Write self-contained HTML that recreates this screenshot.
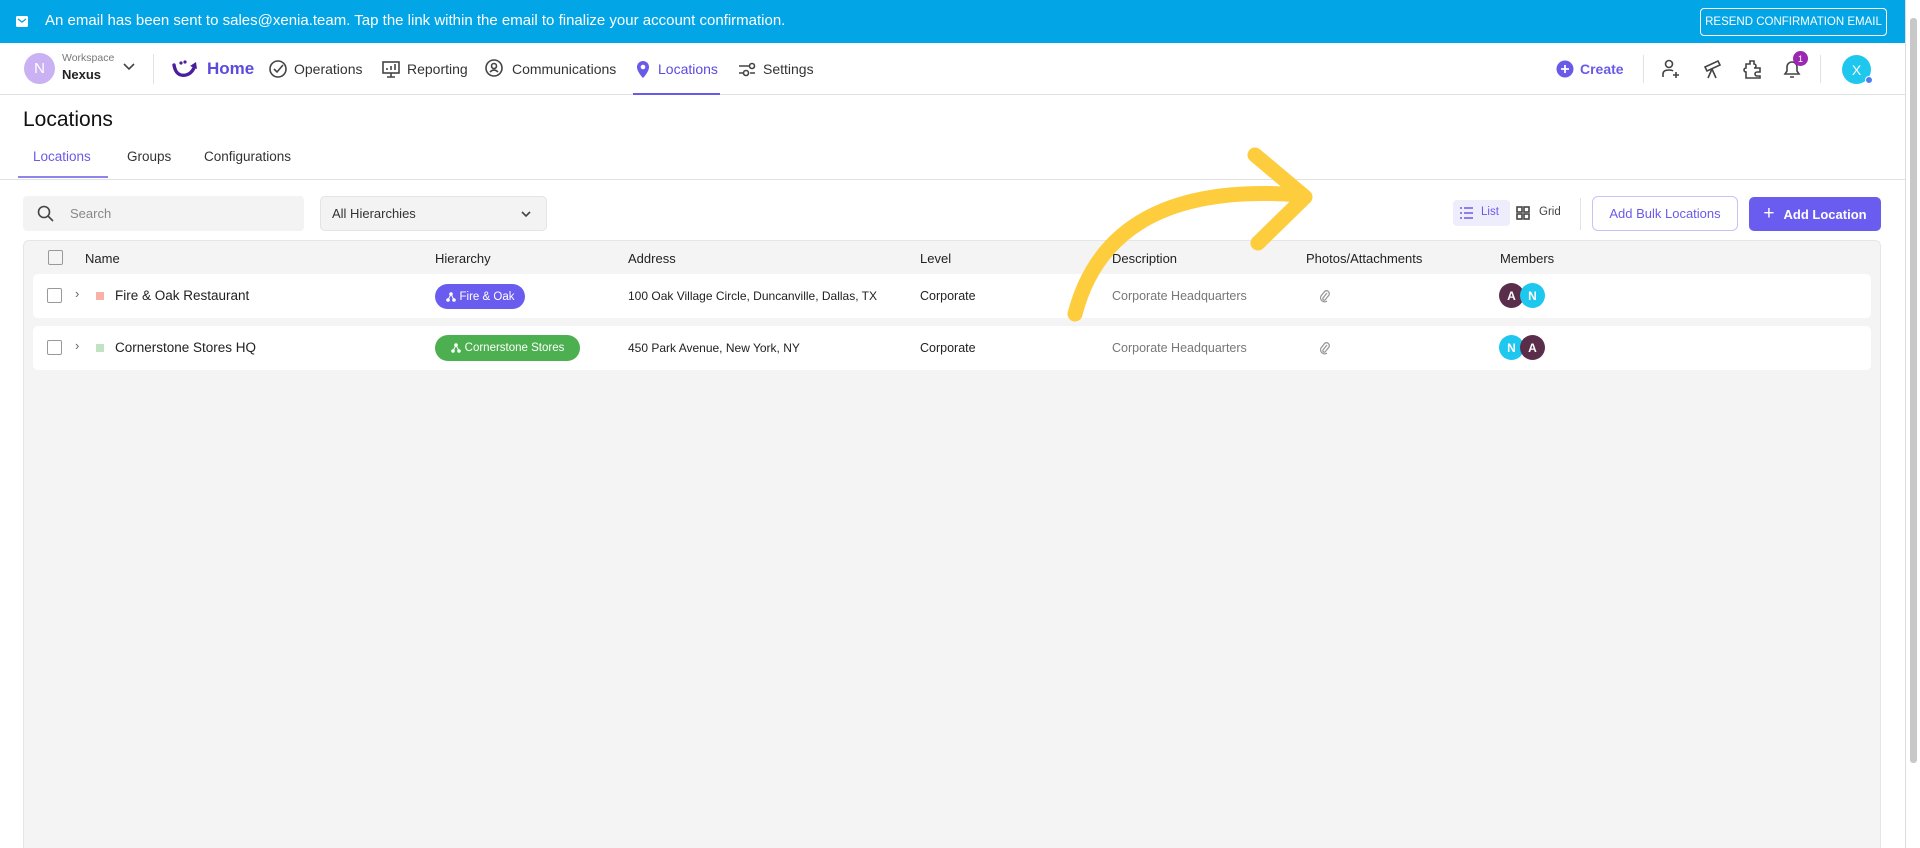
<!DOCTYPE html>
<html style="width:1920px;height:848px;overflow:hidden"><head><meta charset="utf-8">
<style>
*{box-sizing:border-box;margin:0;padding:0}
body{width:1920px;height:848px;overflow:hidden;background:#fff;font-family:"Liberation Sans",sans-serif;color:#222;position:relative}
.abs{position:absolute}
.banner{left:0;top:0;width:1920px;height:43px;background:#02a5e6;color:#fff;font-size:15px}
.nav{top:43px;left:0;width:1905px;height:52px;border-bottom:1px solid #e2e2e2;background:#fff}
.navitem{top:0;height:52px;display:flex;align-items:center;font-size:14px;color:#333;gap:6px}
.t{font-size:13px;color:#222}
.ico{stroke:#444;fill:none;stroke-width:1.6}
</style></head><body>
<div class="abs banner">
  <svg class="abs" style="left:16px;top:16px" width="12" height="11" viewBox="0 0 12 11"><rect width="12" height="11" rx="1.5" fill="#fff"/><path d="M2 3l4 3 4-3" stroke="#02a5e6" stroke-width="1.3" fill="none"/></svg>
  <div class="abs" style="left:45px;top:12px;font-size:15px">An email has been sent to sales@xenia.team. Tap the link within the email to finalize your account confirmation.</div>
  <div class="abs" style="left:1700px;top:8px;width:187px;height:28px;border:1px solid #fff;border-radius:4px;font-size:11.5px;display:flex;align-items:center;justify-content:center">RESEND CONFIRMATION EMAIL</div>
</div>
<div class="abs" style="left:1905px;top:0;width:15px;height:848px;background:#fff;border-left:1px solid #ddd"><div style="position:absolute;left:4px;top:18px;width:7px;height:745px;background:#c8c8c8;border-radius:3px"></div></div>
<div class="abs nav">
  <div class="abs" style="left:24px;top:10px;width:31px;height:31px;border-radius:50%;background:#c9b1f4;color:#fff;font-size:15px;display:flex;align-items:center;justify-content:center">N</div>
  <div class="abs" style="left:62px;top:9px;font-size:10.5px;color:#777">Workspace</div>
  <div class="abs" style="left:62px;top:24px;font-size:13px;font-weight:bold;color:#222">Nexus</div>
  <svg class="abs" style="left:123px;top:20px" width="12" height="8"><path d="M1 1l5 5 5-5" class="ico"/></svg>
  <div class="abs" style="left:153px;top:11px;width:1px;height:30px;background:#e2e2e2"></div>
  <div class="abs navitem" style="left:171px"><svg width="30" height="20" viewBox="0 0 30 20"><path d="M3 6q2 12 12 10q5-1 8-7" stroke="#4a1f9e" stroke-width="3.4" fill="none" stroke-linecap="round"/><path d="M19 7l6-4 1 7z" fill="#4a1f9e"/><circle cx="10" cy="4" r="1.6" fill="#4a1f9e"/><circle cx="14" cy="3" r="1.6" fill="#4a1f9e"/></svg><span style="font-size:17px;color:#5b4ae0;font-weight:bold">Home</span></div>
  <div class="abs navitem" style="left:268px"><svg width="20" height="20"><circle cx="10" cy="10" r="8" class="ico"/><path d="M6 10l3 3 6-7" class="ico"/></svg>Operations</div>
  <div class="abs navitem" style="left:381px"><svg width="20" height="20"><rect x="2" y="3" width="16" height="11" class="ico"/><path d="M10 14v4M6 18h8M6 11V9M10 11V7M14 11V5" class="ico"/></svg>Reporting</div>
  <div class="abs navitem" style="left:484px"><svg width="22" height="20"><circle cx="10" cy="9" r="8" class="ico"/><circle cx="10" cy="7" r="2.5" class="ico"/><path d="M6 13q4-4 8 0" class="ico"/></svg>Communications</div>
  <div class="abs navitem" style="left:634px;color:#5b4ae0"><svg width="18" height="20"><path d="M9 19s6-6 6-11a6 6 0 0 0-12 0c0 5 6 11 6 11z" fill="#6a5ae8"/><circle cx="9" cy="8" r="2.3" fill="#fff"/></svg>Locations</div>
  <div class="abs" style="left:633px;top:50px;width:87px;height:2px;background:#6a5ae8"></div>
  <div class="abs navitem" style="left:737px"><svg width="20" height="20"><path d="M2 7h10M2 14h4M13 14h5" class="ico"/><circle cx="15" cy="7" r="2.5" class="ico"/><circle cx="9" cy="14" r="2.5" class="ico"/></svg>Settings</div>
  <div class="abs navitem" style="left:1556px;color:#6a5ae8;font-size:14px;font-weight:bold"><svg width="18" height="18"><circle cx="9" cy="9" r="8.5" fill="#6a5ae8"/><path d="M9 5v8M5 9h8" stroke="#fff" stroke-width="1.8"/></svg>Create</div>
  <div class="abs" style="left:1643px;top:12px;width:1px;height:28px;background:#e2e2e2"></div>
  <svg class="abs" style="left:1660px;top:15px" width="22" height="22"><circle cx="9" cy="6" r="3.5" class="ico"/><path d="M3 19v-3q0-4 6-4 3 0 4 1M16 14v6M13 17h6" class="ico"/></svg>
  <svg class="abs" style="left:1702px;top:15px" width="22" height="22"><path d="M3 9l13-6 2 4-13 6zM10 11l-4 9M10 11l4 9" class="ico"/></svg>
  <svg class="abs" style="left:1742px;top:15px" width="22" height="22"><path d="M8 3h4v3a2 2 0 1 1 0 4v0h6v4h-3a2 2 0 1 0 0 4h3v2H4v-6a2 2 0 1 1 0-4V6h4z" class="ico"/></svg>
  <svg class="abs" style="left:1781px;top:15px" width="22" height="22"><path d="M4 16h14l-2-3V9a5 5 0 0 0-10 0v4zM9 19h4" class="ico"/></svg>
  <div class="abs" style="left:1793px;top:8px;width:15px;height:15px;border-radius:50%;background:#9c27b0;color:#fff;font-size:9px;display:flex;align-items:center;justify-content:center">1</div>
  <div class="abs" style="left:1820px;top:12px;width:1px;height:28px;background:#e2e2e2"></div>
  <div class="abs" style="left:1842px;top:12px;width:29px;height:29px;border-radius:50%;background:#1ec7ee;color:#fff;font-size:14px;display:flex;align-items:center;justify-content:center">X</div>
  <div class="abs" style="left:1865px;top:33px;width:8px;height:8px;border-radius:50%;background:#4a7ff0;border:1px solid #fff"></div>
</div>
<div class="abs" style="left:23px;top:108px;font-size:21px;color:#111">Locations</div>
<div class="abs" style="left:33px;top:149px;font-size:13.5px;color:#6a5ae8">Locations</div>
<div class="abs" style="left:18px;top:176px;width:90px;height:2px;background:#8f84ee"></div>
<div class="abs" style="left:127px;top:149px;font-size:13.5px;color:#333">Groups</div>
<div class="abs" style="left:204px;top:149px;font-size:13.5px;color:#333">Configurations</div>
<div class="abs" style="left:0;top:179px;width:1905px;height:1px;background:#e2e2e2"></div>

<div class="abs" style="left:23px;top:196px;width:281px;height:35px;background:#f3f3f3;border-radius:4px"><svg class="abs" style="left:14px;top:9px" width="18" height="18"><circle cx="7" cy="7" r="5.5" class="ico"/><path d="M11 11l5 5" class="ico"/></svg><div class="abs" style="left:47px;top:10px;font-size:13px;color:#888">Search</div></div>
<div class="abs" style="left:320px;top:196px;width:227px;height:35px;background:#f3f3f3;border:1px solid #e4e4e4;border-radius:5px"><div class="abs" style="left:11px;top:9px;font-size:13px;color:#333">All Hierarchies</div><svg class="abs" style="left:200px;top:14px" width="10" height="7"><path d="M1 1l4 4 4-4" class="ico" stroke-width="1.2"/></svg></div>

<div class="abs" style="left:1453px;top:200px;width:57px;height:26px;background:#eeedfc;border-radius:4px"><svg class="abs" style="left:6px;top:6px" width="15" height="14"><path d="M1 2h2M5 2h9M1 7h2M5 7h9M1 12h2M5 12h9" stroke="#6a5ae8" stroke-width="1.4"/></svg><div class="abs" style="left:28px;top:6px;font-size:11.5px;color:#6a5ae8">List</div></div>
<svg class="abs" style="left:1516px;top:206px" width="14" height="14"><rect x="1" y="1" width="5" height="5" class="ico" stroke-width="1.2"/><rect x="8" y="1" width="5" height="5" class="ico" stroke-width="1.2"/><rect x="1" y="8" width="5" height="5" class="ico" stroke-width="1.2"/><rect x="8" y="8" width="5" height="5" class="ico" stroke-width="1.2"/></svg>
<div class="abs" style="left:1539px;top:206px;font-size:11.5px;color:#444">Grid</div>
<div class="abs" style="left:1580px;top:198px;width:1px;height:32px;background:#e4e4e4"></div>
<div class="abs" style="left:1592px;top:196px;width:146px;height:35px;border:1px solid #c9c2f7;border-radius:6px;color:#6a5ae8;font-size:13px;display:flex;align-items:center;justify-content:center">Add Bulk Locations</div>
<div class="abs" style="left:1749px;top:197px;width:132px;height:34px;background:#6b5cf0;border-radius:5px;color:#fff;font-size:13px;font-weight:bold;display:flex;align-items:center;justify-content:center;gap:9px"><span style="font-size:19px;font-weight:normal">+</span>Add Location</div>

<div class="abs" style="left:23px;top:240px;width:1858px;height:608px;background:#f4f4f4;border:1px solid #e6e6e6;border-bottom:none;border-radius:6px 6px 0 0">
  <div class="abs" style="left:24px;top:9px;width:15px;height:15px;border:1.5px solid #999;border-radius:2px"></div>
  <div class="abs t" style="left:61px;top:10px">Name</div>
  <div class="abs t" style="left:411px;top:10px">Hierarchy</div>
  <div class="abs t" style="left:604px;top:10px">Address</div>
  <div class="abs t" style="left:896px;top:10px">Level</div>
  <div class="abs t" style="left:1088px;top:10px">Description</div>
  <div class="abs t" style="left:1282px;top:10px">Photos/Attachments</div>
  <div class="abs t" style="left:1476px;top:10px">Members</div>
</div>

<div class="abs" style="left:33px;top:274px;width:1838px;height:44px;background:#fff;border-radius:5px">
  <div class="abs" style="left:14px;top:14px;width:15px;height:15px;border:1.5px solid #999;border-radius:2px"></div>
  <div class="abs" style="left:42px;top:12px;font-size:13px;color:#666">›</div>
  <div class="abs" style="left:63px;top:18px;width:8px;height:8px;background:#f8b1a6"></div>
  <div class="abs t" style="left:82px;top:14px;font-size:13.5px">Fire &amp; Oak Restaurant</div>
  <div class="abs" style="left:402px;top:10px;width:90px;height:25px;background:#6b5cf0;border-radius:13px;color:#fff;font-size:11.5px;display:flex;align-items:center;justify-content:center;gap:4px"><svg width="10" height="10"><circle cx="5" cy="2" r="1.8" fill="#fff"/><circle cx="2" cy="8" r="1.8" fill="#fff"/><circle cx="8" cy="8" r="1.8" fill="#fff"/><path d="M5 2L2 8M5 2l3 6" stroke="#fff"/></svg>Fire &amp; Oak</div>
  <div class="abs t" style="left:595px;top:15px;font-size:12px">100 Oak Village Circle, Duncanville, Dallas, TX</div>
  <div class="abs t" style="left:887px;top:15px;font-size:12.5px">Corporate</div>
  <div class="abs" style="left:1079px;top:15px;font-size:12.5px;color:#777">Corporate Headquarters</div>
  <svg class="abs" style="left:1286px;top:15px" width="12" height="14" viewBox="0 0 12 14"><path d="M8 4L4 9a1.5 1.5 0 0 0 2 2l4-5a3 3 0 0 0-4-4L2 7a4 4 0 0 0 6 5" stroke="#999" stroke-width="1.3" fill="none"/></svg>
  <div class="abs" style="left:1466px;top:9px;width:25px;height:25px;border-radius:50%;background:#5a2e4a;color:#fff;font-size:12px;font-weight:bold;display:flex;align-items:center;justify-content:center">A</div>
  <div class="abs" style="left:1487px;top:9px;width:25px;height:25px;border-radius:50%;background:#1ec7ee;color:#fff;font-size:12px;font-weight:bold;display:flex;align-items:center;justify-content:center">N</div>
</div>
<div class="abs" style="left:33px;top:326px;width:1838px;height:44px;background:#fff;border-radius:5px">
  <div class="abs" style="left:14px;top:14px;width:15px;height:15px;border:1.5px solid #999;border-radius:2px"></div>
  <div class="abs" style="left:42px;top:12px;font-size:13px;color:#666">›</div>
  <div class="abs" style="left:63px;top:18px;width:8px;height:8px;background:#bfe3c3"></div>
  <div class="abs t" style="left:82px;top:14px;font-size:13.5px">Cornerstone Stores HQ</div>
  <div class="abs" style="left:402px;top:9px;width:145px;height:26px;background:#4caf50;border-radius:13px;color:#fff;font-size:11.5px;display:flex;align-items:center;justify-content:center;gap:4px"><svg width="10" height="10"><circle cx="5" cy="2" r="1.8" fill="#fff"/><circle cx="2" cy="8" r="1.8" fill="#fff"/><circle cx="8" cy="8" r="1.8" fill="#fff"/><path d="M5 2L2 8M5 2l3 6" stroke="#fff"/></svg>Cornerstone Stores</div>
  <div class="abs t" style="left:595px;top:15px;font-size:12px">450 Park Avenue, New York, NY</div>
  <div class="abs t" style="left:887px;top:15px;font-size:12.5px">Corporate</div>
  <div class="abs" style="left:1079px;top:15px;font-size:12.5px;color:#777">Corporate Headquarters</div>
  <svg class="abs" style="left:1286px;top:15px" width="12" height="14" viewBox="0 0 12 14"><path d="M8 4L4 9a1.5 1.5 0 0 0 2 2l4-5a3 3 0 0 0-4-4L2 7a4 4 0 0 0 6 5" stroke="#999" stroke-width="1.3" fill="none"/></svg>
  <div class="abs" style="left:1466px;top:9px;width:25px;height:25px;border-radius:50%;background:#1ec7ee;color:#fff;font-size:12px;font-weight:bold;display:flex;align-items:center;justify-content:center">N</div>
  <div class="abs" style="left:1487px;top:9px;width:25px;height:25px;border-radius:50%;background:#5a2e4a;color:#fff;font-size:12px;font-weight:bold;display:flex;align-items:center;justify-content:center">A</div>
</div>

<svg class="abs" style="left:0;top:0" width="1920" height="848">
  <path d="M1075 314 Q1110 180 1300 195" stroke="#fdcd3e" stroke-width="15" fill="none" stroke-linecap="round"/>
  <path d="M1255 155 L1305 197 L1258 243" stroke="#fdcd3e" stroke-width="15" fill="none" stroke-linecap="round" stroke-linejoin="round"/>
</svg>
</body></html>
